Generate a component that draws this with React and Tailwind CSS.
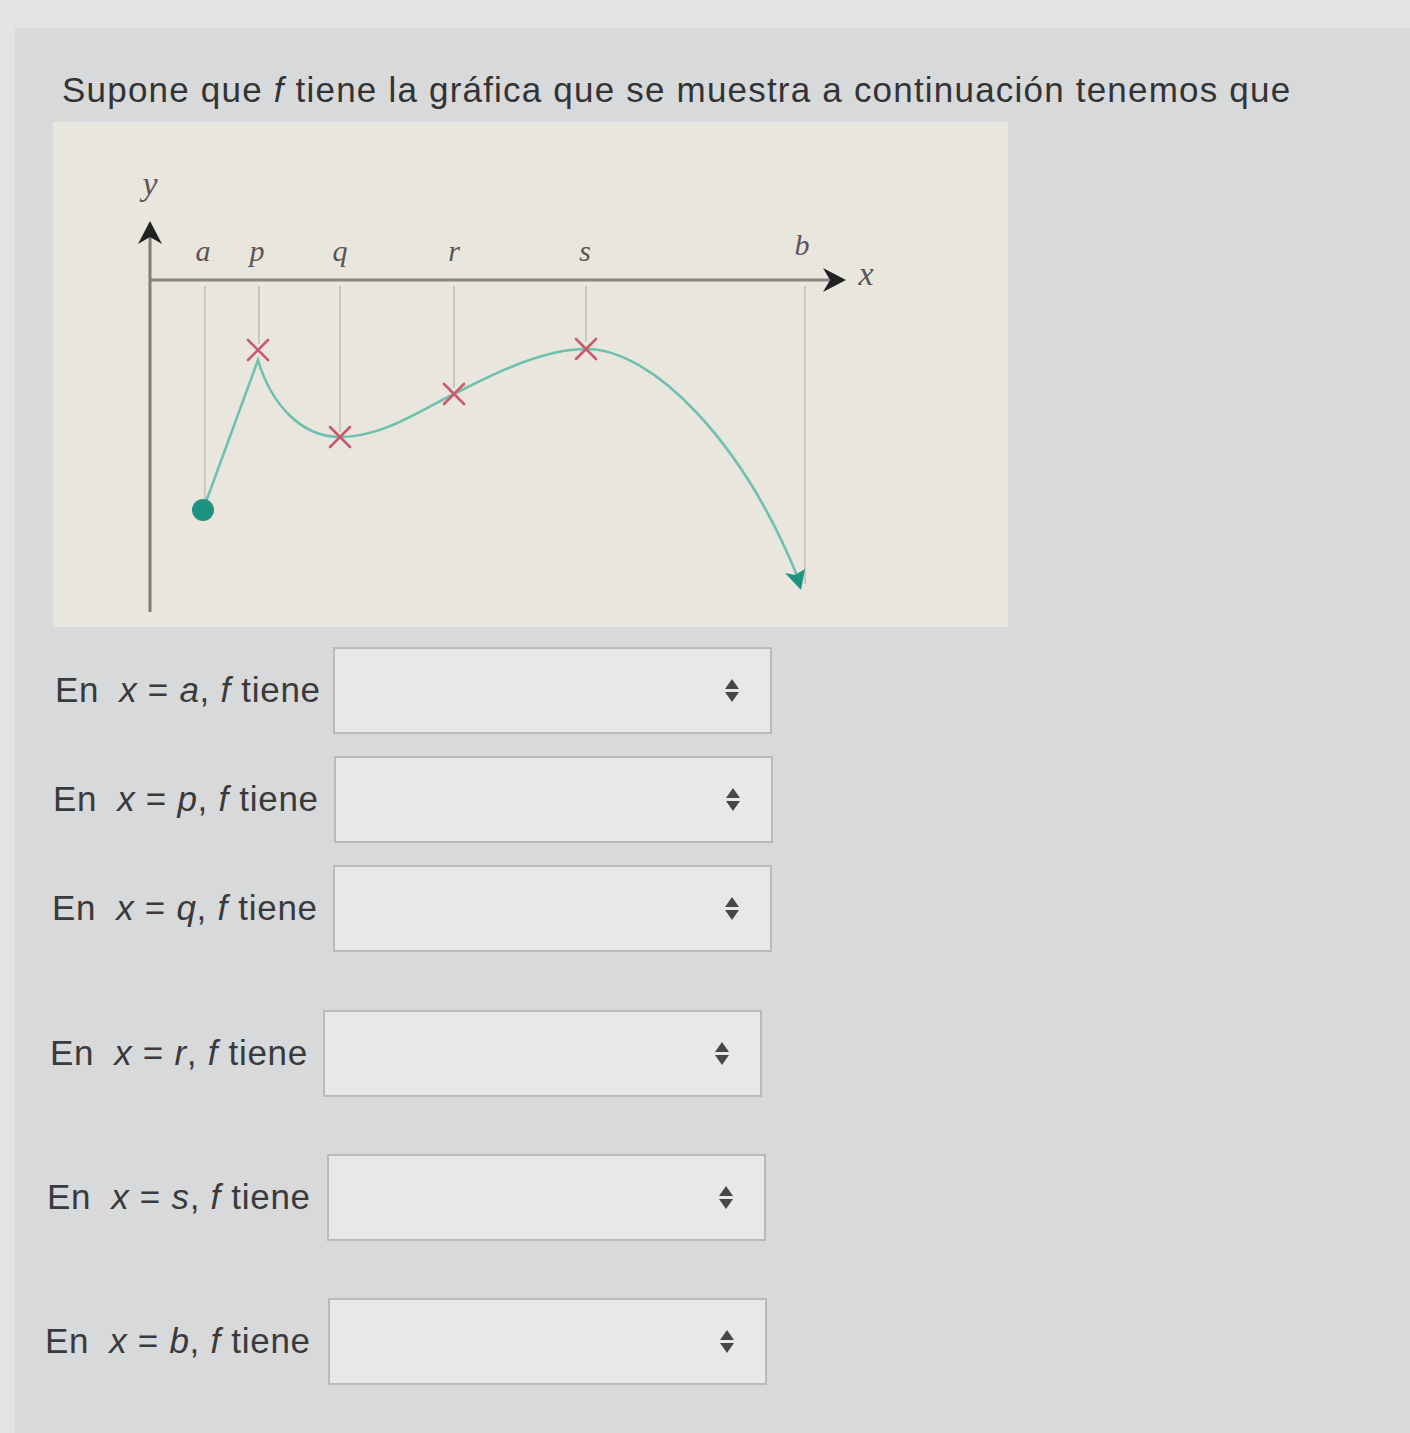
import React from 'react';

const rows = [
  { v: 'a', lx: 40, bx: 333, mt: 20 },
  { v: 'p', lx: 38, bx: 334, mt: 22 },
  { v: 'q', lx: 37, bx: 333, mt: 22 },
  { v: 'r', lx: 35, bx: 323, mt: 58 },
  { v: 's', lx: 32, bx: 327, mt: 57 },
  { v: 'b', lx: 30, bx: 328, mt: 57 },
];

const Cross = ({ x, y }) => (
  <g stroke="#c95b6c" strokeWidth="2.6" strokeLinecap="round">
    <line x1={x - 10} y1={y - 10} x2={x + 10} y2={y + 10} />
    <line x1={x - 10} y1={y + 10} x2={x + 10} y2={y - 10} />
  </g>
);

const Graph = () => (
  <svg width="955" height="505" viewBox="0 0 955 505" className="block">
    {/* guides */}
    <g stroke="#c3bfba" strokeWidth="1.6">
      <line x1="152" y1="164" x2="152" y2="380" />
      <line x1="206" y1="164" x2="206" y2="222" />
      <line x1="287" y1="164" x2="287" y2="310" />
      <line x1="401" y1="164" x2="401" y2="266" />
      <line x1="533" y1="164" x2="533" y2="220" />
      <line x1="752" y1="164" x2="752" y2="462" />
    </g>
    {/* axes */}
    <line x1="97" y1="112" x2="97" y2="490" stroke="#817b79" strokeWidth="3" />
    <line x1="97" y1="158" x2="780" y2="158" stroke="#8a8583" strokeWidth="3" />
    <path d="M97 99 L109 122 L97 115 L85 122 Z" fill="#222" />
    <path d="M793 158 L770 146 L777 158 L770 170 Z" fill="#222" />
    {/* curve */}
    <path
      d="M150 388 L205 238 C218 282 248 315 287 315 C330 315 368 288 401 272 C440 252 490 227 533 227 C600 227 690 320 745 456"
      fill="none"
      stroke="#6fc0b0"
      strokeWidth="2.6"
    />
    <path d="M748 468 L732 451 L742 453 L752 447 Z" fill="#1f9382" />
    <circle cx="150" cy="388" r="11" fill="#1f9382" />
    <Cross x={205} y={228} />
    <Cross x={287} y={315} />
    <Cross x={401} y={272} />
    <Cross x={533} y={227} />
    {/* labels */}
    <g fontFamily="'Liberation Serif', serif" fontStyle="italic" fill="#5a5556" fontSize="30">
      <text x="97" y="73" textAnchor="middle" fontSize="34">y</text>
      <text x="150" y="139" textAnchor="middle">a</text>
      <text x="204" y="139" textAnchor="middle">p</text>
      <text x="287" y="139" textAnchor="middle">q</text>
      <text x="401" y="139" textAnchor="middle">r</text>
      <text x="532" y="139" textAnchor="middle">s</text>
      <text x="749" y="133" textAnchor="middle">b</text>
      <text x="813" y="163" textAnchor="middle" fontSize="34">x</text>
    </g>
  </svg>
);

const SelectArrows = () => (
  <div className="flex flex-col items-center gap-[3px]">
    <span className="block h-0 w-0 border-x-[7px] border-b-[10px] border-x-transparent border-b-[#474747]" />
    <span className="block h-0 w-0 border-x-[7px] border-t-[10px] border-x-transparent border-t-[#474747]" />
  </div>
);

export default function App() {
  return (
    <div className="min-h-[1433px] bg-[#e4e2e3] pt-[28px] pl-[15px] font-['Liberation_Sans',Arial,sans-serif]">
      <div className="min-h-[1405px] bg-[#d7d9da] pt-[42px] pb-[40px]">
        <p className="ml-[47px] text-[35px] leading-[40px] text-[#333335] tracking-[1.2px] whitespace-nowrap">
          Supone que <i>f</i> tiene la gráfica que se muestra a continuación tenemos que
        </p>

        <div className="ml-[38px] mt-[12px] w-[955px] bg-[#e9e6de]">
          <Graph />
        </div>

        {rows.map((r) => (
          <div key={r.v} className="flex items-center" style={{ marginTop: r.mt }}>
            <div
              className="shrink-0 text-[35px] tracking-[0.7px] text-[#3a3a3c] whitespace-nowrap"
              style={{ marginLeft: r.lx, width: r.bx - 15 - r.lx }}
            >
              En<span className="ml-[20px] italic">x</span> = <i>{r.v}</i>, <i>f</i> tiene
            </div>
            <div className="flex h-[87px] w-[439px] items-center justify-end border-2 border-[#bababa] bg-[#e8e8e8] pr-[31px]">
              <SelectArrows />
            </div>
          </div>
        ))}
      </div>
    </div>
  );
}
